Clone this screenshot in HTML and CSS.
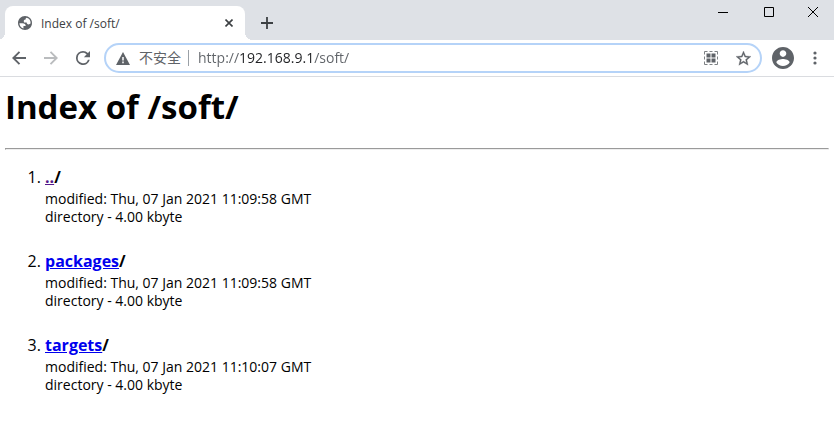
FILE: index.html
```html
<!DOCTYPE html>
<html lang="en">
<head>
    <meta charset="UTF-8">
    <meta name="viewport" content="width=device-width, initial-scale=1.0">
    <title>Index of /soft/</title>
    <link rel="stylesheet" href="styles.css">
</head>
<body>

<header class="browser">
    <div class="tab-strip">
        <div class="tab">
            <svg class="favicon" width="14" height="14" viewBox="2 2 20 20"><path fill="#5f6368" d="M12 2C6.480 2 2 6.480 2 12s4.480 10 10 10 10-4.480 10-10S17.520 2 12 2z"/><path fill="#fff" d="M4 12.300h4.400c3 0 4.600 1.500 4.600 4h-3.200v3.400A8 8 0 0 1 4 12.300zM14.400 4.400A8 8 0 0 1 20 12.500c-.8 1.200-1.700 1.500-3 1.500-1.800 0-2.600-.9-2.600-2.600h-3.700c-1.300-3.200.2-4.600 2.200-4.500 0-1.400.4-2.200 1.500-2.500z"/></svg>
            <span class="tab-title">Index of /soft/</span>
            <button class="tab-close" aria-label="Close tab">
                <svg width="8" height="8" viewBox="0 0 8 8"><path d="M.5.5l7 7M7.500.5l-7 7" stroke="#3c4043" stroke-width="1.600"/></svg>
            </button>
        </div>
        <button class="new-tab" aria-label="New tab">
            <svg width="12" height="12" viewBox="0 0 12 12"><path d="M6 0v12M0 6h12" stroke="#3c4043" stroke-width="1.800"/></svg>
        </button>
        <div class="window-buttons">
            <button aria-label="Minimize"><svg width="10" height="10" viewBox="0 0 10 10"><path d="M0 5.500h10" stroke="#000"/></svg></button>
            <button aria-label="Maximize"><svg width="10" height="10" viewBox="0 0 10 10"><path d="M.5.5h9v9h-9z" fill="none" stroke="#000"/></svg></button>
            <button aria-label="Close"><svg width="10" height="10" viewBox="0 0 10 10"><path d="M0 0l10 10M10 0L0 10" stroke="#000"/></svg></button>
        </div>
    </div>

    <div class="toolbar">
        <button aria-label="Back"><svg width="14" height="14" viewBox="0 0 14 14"><path d="M14 7H1.500M7.500.8L1.300 7l6.200 6.200" fill="none" stroke="#5f6368" stroke-width="1.900"/></svg></button>
        <button aria-label="Forward" disabled><svg width="14" height="14" viewBox="0 0 14 14"><path d="M0 7h12.500M6.500.8L12.700 7l-6.200 6.200" fill="none" stroke="#babcbe" stroke-width="1.900"/></svg></button>
        <button aria-label="Reload"><svg width="14" height="14" viewBox="4 4 16 16"><path fill="#5f6368" d="M17.650 6.350A7.960 7.960 0 0 0 12 4a8 8 0 1 0 7.730 10h-2.080A6 6 0 1 1 12 6c1.660 0 3.140.69 4.220 1.780L13 11h7V4z"/></svg></button>
        <div class="address-bar">
            <svg width="14" height="13" viewBox="0 0 14 13"><path fill="#5f6368" d="M7 0l7 13H0z"/><path d="M7 5v3.500M7 9.500v1.700" stroke="#fff" stroke-width="1.500"/></svg>
            <span class="security">不安全</span>
            <input class="url" type="text" value="http://192.168.9.1/soft/" aria-label="Address">
            <button aria-label="Create QR code">
                <svg width="14" height="14" viewBox="0 0 14 14"><path d="M.5 3.500V.5h3M5.500.5h3M10.500.5h3v3M13.500 5.500v3M13.500 10.500v3h-3M8.500 13.500h-3M3.500 13.500h-3v-3M.5 8.500v-3" fill="none" stroke="#7d8184"/><path fill="#5f6368" d="M2.500 2.500h4v4h-4zM7.500 2.500h4v4h-4zM2.500 7.500h4v4h-4zM7.500 7.500h4v4h-4z"/></svg>
            </button>
            <button aria-label="Bookmark this page">
                <svg width="15" height="15" viewBox="2 2 20 20"><path fill="#5f6368" stroke="#5f6368" stroke-width=".4" d="M22 9.240l-7.190-.62L12 2 9.190 8.630 2 9.240l5.460 4.730L5.820 21 12 17.270 18.180 21l-1.630-7.030L22 9.240zM12 15.400l-3.760 2.270 1-4.280-3.320-2.880 4.380-.38L12 6.100l1.710 4.040 4.380.38-3.320 2.880 1 4.280L12 15.400z"/></svg>
            </button>
        </div>
        <button class="profile" aria-label="Profile">
            <svg width="22" height="22" viewBox="2 2 20 20"><path fill="#5f6368" d="M12 2C6.480 2 2 6.480 2 12s4.480 10 10 10 10-4.480 10-10S17.520 2 12 2zm0 3c1.660 0 3 1.340 3 3s-1.340 3-3 3-3-1.340-3-3 1.340-3 3-3zm0 14.200c-2.500 0-4.710-1.280-6-3.220.03-1.990 4-3.080 6-3.080 1.990 0 5.970 1.090 6 3.080-1.290 1.940-3.500 3.220-6 3.220z"/></svg>
        </button>
        <button class="menu" aria-label="Menu">
            <svg width="4" height="14" viewBox="0 0 4 14"><g fill="#5f6368"><circle cx="2" cy="2" r="1.600"/><circle cx="2" cy="7" r="1.600"/><circle cx="2" cy="12" r="1.600"/></g></svg>
        </button>
    </div>
</header>

<main class="listing">
    <h1>Index of /soft/</h1>
    <hr>
    <ol>
        <li>
            <strong><a class="visited" href="../">..</a>/</strong>
            <small>modified: Thu, 07 Jan 2021 11:09:58 GMT<br>directory - 4.00 kbyte</small>
        </li>
        <li>
            <strong><a href="packages/">packages</a>/</strong>
            <small>modified: Thu, 07 Jan 2021 11:09:58 GMT<br>directory - 4.00 kbyte</small>
        </li>
        <li>
            <strong><a href="targets/">targets</a>/</strong>
            <small>modified: Thu, 07 Jan 2021 11:10:07 GMT<br>directory - 4.00 kbyte</small>
        </li>
    </ol>
</main>

</body>
</html>
```

FILE: styles.css
```css
* {
    box-sizing: border-box;
}
body {
    margin: 0;
    background: #fff;
    color: #000;
    font-family: "Open Sans", "Noto Sans CJK SC", sans-serif;
}
button {
    display: flex;
    align-items: center;
    justify-content: center;
    padding: 0;
    border: 0;
    background: none;
}
svg {
    display: block;
    flex: none;
}

/* tabs and window buttons */
.tab-strip {
    display: flex;
    height: 40px;
    padding-left: 5px;
    background: #dee1e6;
}
.tab {
    position: relative;
    display: flex;
    align-items: center;
    gap: 9px;
    width: 240px;
    margin-top: 6px;
    padding: 0 12px 0 13px;
    border-radius: 8px 8px 0 0;
    background: #fff;
}
/* curved feet of the active tab */
.tab::before,
.tab::after {
    content: "";
    position: absolute;
    bottom: 0;
    width: 8px;
    height: 8px;
}
.tab::before {
    left: -8px;
    background: radial-gradient(circle at 0 0, #dee1e6 8px, #fff 8px);
}
.tab::after {
    right: -8px;
    background: radial-gradient(circle at 100% 0, #dee1e6 8px, #fff 8px);
}
.tab-title {
    flex: 1;
    color: #3c4043;
    font-size: 12px;
}
.new-tab {
    width: 28px;
    margin-left: 8px;
    padding-top: 6px;
}
.window-buttons {
    display: flex;
    margin-left: auto;
}
.window-buttons button {
    width: 46px;
    height: 24px;
}
.window-buttons button:last-child {
    width: 42px;
}

/* toolbar */
.toolbar {
    display: flex;
    align-items: center;
    height: 37px;
    padding: 0 8px 0 3px;
    border-bottom: 1px solid #dadce0;
}
.toolbar > button {
    width: 32px;
    height: 28px;
}
.address-bar {
    display: flex;
    flex: 1;
    align-items: center;
    min-width: 0;
    height: 30px;
    margin-left: 5px;
    padding: 0 1px 0 10px;
    border: 2px solid #b5d3f8;
    border-radius: 15px;
}
.security {
    margin-left: 9px;
    padding-right: 7px;
    border-right: 1px solid #9aa0a6;
    color: #5f6368;
    font-size: 14px;
    line-height: 16px;
}
/* the host is darker than the scheme and the path */
.url {
    flex: 1;
    min-width: 0;
    margin-left: 9px;
    padding: 0;
    border: 0;
    outline: 0;
    background: linear-gradient(to right, #5f6368 42px, #202124 42px 116px, #5f6368 116px);
    -webkit-background-clip: text;
    background-clip: text;
    color: transparent;
    font-family: inherit;
    font-size: 14px;
    line-height: 20px;
}
.address-bar button {
    width: 32px;
    height: 26px;
}
.toolbar .profile {
    width: 42px;
}
.toolbar .menu {
    width: 22px;
}

/* directory listing */
.listing {
    padding: 5px;
}
h1 {
    margin: 0 0 16px;
    font-size: 33px;
    line-height: 50px;
}
hr {
    margin: 0;
}
ol {
    margin: 16px 0 0;
    padding-left: 40px;
    font-size: 16px;
    line-height: 22px;
}
li {
    margin-bottom: 24px;
}
a {
    color: #0000ee;
}
.visited {
    color: #551a8b;
}
small {
    display: block;
    margin-top: 2px;
    font-size: 14px;
    line-height: 18px;
}
```
